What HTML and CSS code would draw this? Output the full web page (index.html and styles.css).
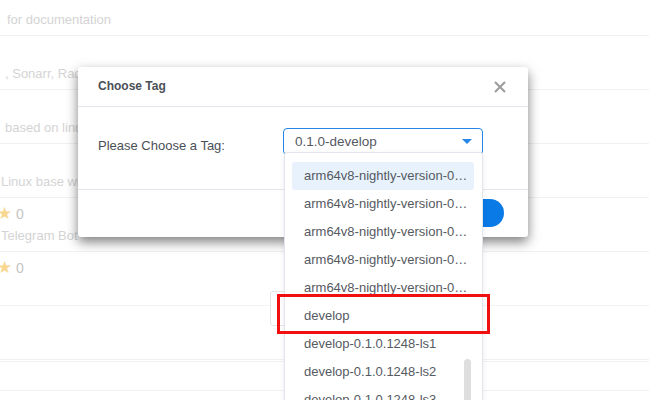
FILE: index.html
```html
<!DOCTYPE html>
<html lang="en">

<head>
    <meta charset="UTF-8">
    <meta name="viewport" content="width=device-width, initial-scale=1.0">
    <title>Choose Tag</title>
    <link rel="stylesheet" href="styles.css">
</head>

<body>
    <div class="list">
        <div class="row first">
            <p class="desc">for documentation</p>
        </div>
        <div class="row">
            <p class="line"></p>
            <p class="desc">, Sonarr, Radarr</p>
        </div>
        <div class="row">
            <p class="line"></p>
            <p class="desc">based on linuxserver</p>
        </div>
        <div class="row">
            <p class="line"></p>
            <p class="desc shift">Linux base with</p>
        </div>
        <div class="row">
            <p class="line"><span class="star">&#9733;</span> 0</p>
            <p class="desc shift">Telegram Bot</p>
        </div>
        <div class="row">
            <p class="line"><span class="star">&#9733;</span> 0</p>
            <p class="desc"></p>
        </div>
        <div class="row tall"></div>
        <div class="row short"></div>
    </div>

    <div class="ghostBtn"></div>

    <div class="modal">
        <div class="modalHead">
            <span class="modalTitle">Choose Tag</span>
            <svg class="close" width="12" height="12" viewBox="0 0 12 12">
                <path d="M1 1 L11 11 M11 1 L1 11" stroke="#9b9b9b" stroke-width="2" fill="none" />
            </svg>
        </div>
        <div class="modalBody">
            <span class="label">Please Choose a Tag:</span>
            <div class="select">
                <span>0.1.0-develop</span>
                <span class="caret"></span>
            </div>
        </div>
        <div class="modalFoot">
            <button class="btnCancel"></button>
            <button class="btnOk"></button>
        </div>
    </div>

    <div class="dropdown">
        <div class="option active">arm64v8-nightly-version-0.1.0.1248</div>
        <div class="option">arm64v8-nightly-version-0.1.0.1247</div>
        <div class="option">arm64v8-nightly-version-0.1.0.1246</div>
        <div class="option">arm64v8-nightly-version-0.1.0.1245</div>
        <div class="option">arm64v8-nightly-version-0.1.0.1244</div>
        <div class="option">develop</div>
        <div class="option">develop-0.1.0.1248-ls1</div>
        <div class="option">develop-0.1.0.1248-ls2</div>
        <div class="option">develop-0.1.0.1248-ls3</div>
        <div class="scrollbar"></div>
    </div>

    <div class="highlight"></div>
</body>

</html>
```

FILE: styles.css
```css
body {
    margin: 0;
    font-family: "Liberation Sans", Arial, sans-serif;
    font-size: 13px;
    background-color: white;
    overflow: hidden;
}

p {
    margin: 0;
}

.list {
    width: 100%;
}

.row {
    height: 53px;
    border-bottom: 1px solid #f2f2f2;
    display: flex;
    flex-direction: column;
    padding-left: 5px;
}

.row.first {
    height: 35px;
    justify-content: flex-end;
    padding-left: 7px;
}

.row.first .desc {
    margin-bottom: 7px;
}

.line {
    height: 16px;
    margin-top: 8px;
    color: #c4c4c4;
    font-size: 14px;
    line-height: 16px;
    margin-left: -5px;
}

.star {
    color: #f8d78f;
    font-size: 17px;
    margin-left: -3px;
}

.desc {
    height: 16px;
    margin-top: 6px;
    color: #d4d4d4;
    line-height: 16px;
}

.desc.shift {
    margin-left: -4px;
}

.row.tall {
    height: 53px;
}

.row.short {
    height: 28px;
    border-top: 1px solid #f2f2f2;
    margin-top: 1px;
}

.ghostBtn {
    position: absolute;
    left: 270px;
    top: 291px;
    width: 30px;
    height: 33px;
    border: 1px solid #e6e6e6;
    border-radius: 3px;
    background-color: white;
}

.modal {
    position: absolute;
    left: 78px;
    top: 67px;
    width: 450px;
    height: 170px;
    background-color: white;
    border-radius: 3px;
    box-shadow: 0 5px 12px rgba(0, 0, 0, 0.5);
}

.modalHead {
    height: 39px;
    border-bottom: 1px solid #e4e8ee;
    display: flex;
    align-items: center;
    justify-content: space-between;
    padding: 0 22px 0 20px;
}

.modalTitle {
    font-size: 12px;
    font-weight: bold;
    color: #4a4f57;
    margin-top: -1px;
}

.close {
    margin-top: 1px;
}

.modalBody {
    height: 82px;
    display: flex;
    align-items: center;
    padding-left: 20px;
    border-bottom: 1px solid #e4e8ee;
}

.label {
    color: #4a4f57;
    width: 185px;
    margin-top: -6px;
}

.select {
    box-sizing: border-box;
    width: 200px;
    height: 27px;
    border: 1px solid #2486e6;
    border-radius: 4px;
    display: flex;
    align-items: center;
    justify-content: space-between;
    padding: 0 10px 0 11px;
    color: #555a62;
    margin-top: -13px;
    font-size: 13.5px;
}

.caret {
    width: 0;
    height: 0;
    border-left: 5px solid transparent;
    border-right: 5px solid transparent;
    border-top: 5px solid #2486e6;
}

.modalFoot {
    display: flex;
    justify-content: flex-end;
    padding: 9px 24px 0 0;
    gap: 10px;
}

.btnCancel {
    height: 28px;
    width: 80px;
    border: 1px solid #dcdcdc;
    border-radius: 14px;
    background-color: white;
}

.btnOk {
    height: 28px;
    width: 80px;
    border: none;
    border-radius: 14px;
    background-color: #0a7ae6;
}

.dropdown {
    position: absolute;
    left: 284px;
    top: 152px;
    width: 197px;
    height: 260px;
    background-color: white;
    border: 1px solid #e2e6ec;
    border-radius: 3px;
    box-shadow: 0 2px 6px rgba(0, 0, 0, 0.08);
    padding-top: 9px;
    overflow: hidden;
}

.option {
    box-sizing: border-box;
    width: 182px;
    height: 28px;
    line-height: 28px;
    margin-left: 7px;
    padding: 0 4px 0 12px;
    color: #555a62;
    font-size: 13px;
    border-radius: 3px;
    white-space: nowrap;
    overflow: hidden;
    text-overflow: ellipsis;
}

.option.active {
    background-color: #e7f2fd;
}

.scrollbar {
    position: absolute;
    left: 179px;
    top: 206px;
    width: 7px;
    height: 60px;
    border-radius: 4px;
    background-color: #dedede;
}

.highlight {
    position: absolute;
    left: 277px;
    top: 294px;
    width: 207px;
    height: 34px;
    border: 3px solid #f20f0f;
}
```
